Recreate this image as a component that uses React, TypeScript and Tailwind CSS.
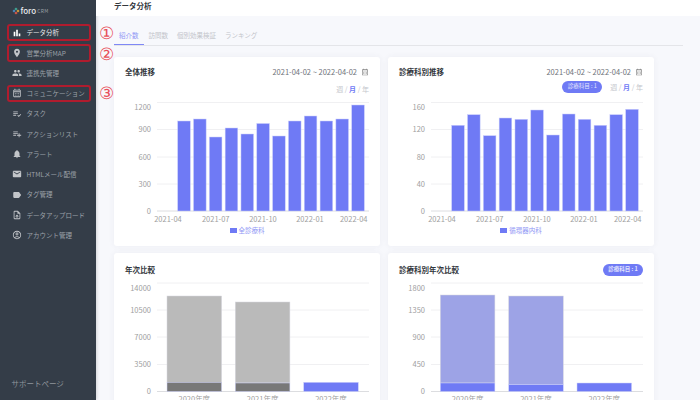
import React from "react";
import {
  MdBarChart,
  MdEmail,
  MdLabel,
  MdLocationOn,
  MdNotifications,
  MdOutlineAccountCircle,
  MdOutlineCalendarMonth,
  MdOutlineUploadFile,
  MdPeople,
  MdPlaylistAdd,
  MdPlaylistAddCheck,
} from "react-icons/md";

const font = "font-['Noto_Sans_CJK_JP','Noto_Sans',sans-serif]";

const navItems = [
  { label: "データ分析", icon: MdBarChart, active: true },
  { label: "営業分析MAP", icon: MdLocationOn },
  { label: "連携先管理", icon: MdPeople },
  { label: "コミュニケーション", icon: MdOutlineCalendarMonth },
  { label: "タスク", icon: MdPlaylistAddCheck },
  { label: "アクションリスト", icon: MdPlaylistAdd },
  { label: "アラート", icon: MdNotifications },
  { label: "HTMLメール配信", icon: MdEmail },
  { label: "タグ管理", icon: MdLabel },
  { label: "データアップロード", icon: MdOutlineUploadFile },
  { label: "アカウント管理", icon: MdOutlineAccountCircle },
];

const leftTops = [121, 119, 137, 128, 134, 123.5, 136, 121, 116, 121, 119, 105];
const rightTops = [125.3, 114.7, 135.7, 118, 119.3, 110, 135, 114, 119.3, 125.3, 114.7, 109.3];
const monthLabels = [
  { text: "2021-04", x: 54 },
  { text: "2021-07", x: 101.7 },
  { text: "2021-10", x: 149 },
  { text: "2022-01", x: 196 },
  { text: "2022-04", x: 239.7 },
];

function Toggle() {
  return (
    <div className="text-[7px] leading-[10px] text-[#c4c6cc]">
      週 / <span className="font-bold text-[#6f7af5]">月</span> / 年
    </div>
  );
}

function Pill() {
  return (
    <div className="flex h-[12px] w-[40px] items-center justify-center rounded-full bg-[#6f7af5] text-[5.5px] leading-none text-[#e4e6fd]">
      診療科目 : 1
    </div>
  );
}

function DateRange() {
  return (
    <div className="flex items-center gap-[4px] text-[7.5px] leading-[10px] text-[#6e7278]">
      <span>2021-04-02 ~ 2022-04-02</span>
      <MdOutlineCalendarMonth className="h-[8px] w-[8px] text-[#888]" />
    </div>
  );
}

function MonthlyChart({ tops, ticks, legend }: { tops: number[]; ticks: string[]; legend: string }) {
  // y coordinates are page pixels, the svg starts at y=97
  const ys = [102.5, 129.5, 157, 184, 211];
  return (
    <div className="flex flex-col">
      <svg width={266} height={128} viewBox="0 97 266 128" className="block">
        {ys.map((y, i) => (
          <g key={y}>
            <line x1={43} x2={255} y1={y} y2={y} stroke={i === 4 ? "#dcdde0" : "#f0f0f2"} />
            <text x={37} y={(i === 0 ? 107.6 : y) + 2.7} textAnchor="end" fontSize={7.5} fill="#a0a0a0">
              {ticks[i]}
            </text>
          </g>
        ))}
        {tops.map((top, i) => (
          <rect key={i} x={63.7 + i * 15.82} y={top} width={12.6} height={211 - top} fill="#6f7af5" stroke="#c9cdfb" strokeWidth={0.5} />
        ))}
        {monthLabels.map((m) => (
          <text key={m.text} x={m.x} y={222} textAnchor="middle" fontSize={7.5} fill="#a0a0a0">
            {m.text}
          </text>
        ))}
      </svg>
      <div className="flex items-center justify-center gap-[2px] text-[6.5px] leading-[10px] text-[#8f96f5]">
        <span className="h-[5px] w-[7px] bg-[#6f7af5]" />
        {legend}
      </div>
    </div>
  );
}

function YearlyChart({
  ticks,
  bars,
  shade,
  tint,
  base,
}: {
  ticks: string[];
  bars: { x: number; top: number; inner: number }[];
  shade: string;
  tint: string;
  base: number;
}) {
  const ys = [283, 310, 337, 364.5];
  return (
    <svg width={266} height={130} viewBox="0 278 266 130" className="block">
      {ys.map((y, i) => (
        <g key={y}>
          <line x1={43} x2={255} y1={y} y2={y} stroke="#f0f0f2" />
          <text x={37} y={(i === 0 ? 288.3 : y) + 2.7} textAnchor="end" fontSize={7.5} fill="#a0a0a0">
            {ticks[i]}
          </text>
        </g>
      ))}
      <line x1={43} x2={255} y1={base} y2={base} stroke="#dcdde0" />
      <text x={37} y={base + 2.7} textAnchor="end" fontSize={7.5} fill="#a0a0a0">
        0
      </text>
      {bars.map((b, i) => (
        <g key={i}>
          {i < 2 && <rect x={b.x} y={b.top} width={54.6} height={b.inner - b.top} fill={shade} stroke="#d8d8e0" strokeWidth={0.5} />}
          <rect x={b.x} y={b.inner} width={54.6} height={base - b.inner} fill={i < 2 ? tint : "#6f7af5"} stroke="#d0d3fb" strokeWidth={0.5} />
          <text x={b.x + 27.3} y={401.5} textAnchor="middle" fontSize={7.5} fill="#a0a0a0">
            {2020 + i}年度
          </text>
        </g>
      ))}
    </svg>
  );
}

function Card({ children, className }: { children: React.ReactNode; className?: string }) {
  return <div className={`w-[266px] rounded-[3px] bg-white shadow-[0_0_6px_rgba(60,70,110,0.06)] ${className ?? ""}`}>{children}</div>;
}

function Sidebar() {
  return (
    <aside className="flex h-[400px] w-[96px] shrink-0 flex-col bg-[#343d48] pl-[11.5px] shadow-[1px_0_3px_rgba(0,0,0,0.15)]">
      <div className="flex h-[22.5px] shrink-0 items-center gap-[1px] pb-[1px]">
        <svg width="8" height="8" viewBox="0 0 8 8">
          <path d="M4 0.5 5.6 2 4 3.5 2.4 2Z" fill="#3fa796" />
          <path d="M6 2.4 7.5 4 6 5.6 4.5 4Z" fill="#d9a23b" />
          <path d="M4 4.5 5.6 6 4 7.5 2.4 6Z" fill="#d8574a" />
          <path d="M2 2.4 3.5 4 2 5.6 0.5 4Z" fill="#4a8fc4" />
        </svg>
        <span className="text-[8px] font-medium leading-none text-[#e8eaec]">foro</span>
        <span className="text-[5px] leading-none tracking-[0.3px] text-[#9aa0a6]">CRM</span>
      </div>
      <nav className="flex flex-col">
        {navItems.map((item) => {
          const Icon = item.icon;
          return (
            <div
              key={item.label}
              className={`flex h-[20.25px] shrink-0 items-center gap-[5px] text-[6.5px] leading-none ${item.active ? "text-[#e8eaec]" : "text-[#9da2a8]"}`}
            >
              <Icon className={`h-[10px] w-[10px] shrink-0 ${item.active ? "text-white" : "text-[#c2c5c9]"}`} />
              <span className="whitespace-nowrap">{item.label}</span>
            </div>
          );
        })}
      </nav>
      <div className="mt-auto pb-[11px] text-[7.5px] leading-[10px] text-[#8f959b]">サポートページ</div>
    </aside>
  );
}

export default function App() {
  return (
    <div className={`relative flex h-[400px] w-[700px] overflow-hidden bg-[#f7f8fc] ${font}`}>
      <Sidebar />
      <main className="flex h-[400px] min-w-0 flex-1 flex-col overflow-hidden">
        <header className="flex h-[16px] shrink-0 items-center bg-white pb-[5px] pl-[18px] text-[7.5px] font-bold leading-none text-[#33373d]">
          データ分析
        </header>
        <div className="ml-[18px] mr-[17px] mt-[13px] flex h-[17px] shrink-0 gap-[9px] border-b border-[#e4e5e9] pt-[1px] text-[6.5px] leading-[11px] text-[#c2c4ca]">
          <span className="-mr-[4px] h-[15px] border-b border-[#7f88f6] px-[5px] text-[#8f96f5]">紹介数</span>
          <span>訪問数</span>
          <span>個別効果検証</span>
          <span>ランキング</span>
        </div>
        <div className="ml-[18px] mt-[11px] grid w-[540px] shrink-0 grid-cols-2 gap-x-[8px] gap-y-[7px]">
          <Card className="h-[189px]">
            <div className="flex h-[40px] flex-col gap-[7px] px-[11px] pt-[10px]">
              <div className="flex items-center justify-between">
                <span className="text-[7.5px] font-bold leading-[10px] text-[#33373d]">全体推移</span>
                <DateRange />
              </div>
              <div className="flex justify-end">
                <Toggle />
              </div>
            </div>
            <MonthlyChart tops={leftTops} ticks={["1200", "900", "600", "300", "0"]} legend="全診療科" />
          </Card>
          <Card className="h-[189px]">
            <div className="flex h-[40px] flex-col gap-[4px] px-[11px] pt-[10px]">
              <div className="flex items-center justify-between">
                <span className="text-[7.5px] font-bold leading-[10px] text-[#33373d]">診療科別推移</span>
                <DateRange />
              </div>
              <div className="flex items-center justify-end gap-[8px]">
                <Pill />
                <Toggle />
              </div>
            </div>
            <MonthlyChart tops={rightTops} ticks={["160", "120", "80", "40", "0"]} legend="循環器内科" />
          </Card>
          <Card className="h-[170px]">
            <div className="flex h-[25px] items-center px-[11px] pt-[8px] text-[7.5px] font-bold leading-[10px] text-[#33373d]">年次比較</div>
            <YearlyChart
              ticks={["14000", "10500", "7000", "3500"]}
              base={391.5}
              shade="#bababa"
              tint="#787878"
              bars={[
                { x: 53, top: 296, inner: 382.3 },
                { x: 121.3, top: 302, inner: 383 },
                { x: 189.7, top: 382.3, inner: 382.3 },
              ]}
            />
          </Card>
          <Card className="h-[170px]">
            <div className="flex h-[25px] items-center justify-between px-[11px] pt-[8px] text-[7.5px] font-bold leading-[10px] text-[#33373d]">
              診療科別年次比較
              <Pill />
            </div>
            <YearlyChart
              ticks={["1800", "1350", "900", "450"]}
              base={391.5}
              shade="#9da3e6"
              tint="#6f7af5"
              bars={[
                { x: 52.3, top: 295, inner: 383 },
                { x: 120.7, top: 296, inner: 384.5 },
                { x: 189, top: 383, inner: 383 },
              ]}
            />
          </Card>
        </div>
      </main>
      {/* red marks drawn over the screenshot */}
      <div className="absolute left-[7px] top-[23.5px] h-[17.5px] w-[83.5px] rounded-[3px] border-2 border-[#b01c2e]" />
      <div className="absolute left-[7px] top-[44px] h-[18px] w-[83.5px] rounded-[3px] border-2 border-[#b01c2e]" />
      <div className="absolute left-[7px] top-[84.5px] h-[17.5px] w-[83.5px] rounded-[3px] border-2 border-[#b01c2e]" />
      <div className="absolute left-[99px] top-[24px] font-['Liberation_Serif',serif] text-[17px] font-light leading-[20px] text-[#e8505a]">①</div>
      <div className="absolute left-[99px] top-[44.5px] font-['Liberation_Serif',serif] text-[17px] font-light leading-[20px] text-[#e8505a]">②</div>
      <div className="absolute left-[99px] top-[84px] font-['Liberation_Serif',serif] text-[17px] font-light leading-[20px] text-[#e8505a]">③</div>
    </div>
  );
}
